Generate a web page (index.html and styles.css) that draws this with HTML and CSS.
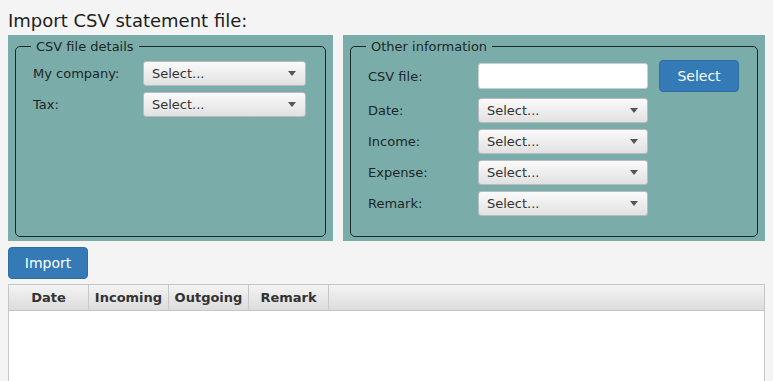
FILE: index.html
```html
<!DOCTYPE html>
<html lang="en">

<head>
    <meta charset="UTF-8">
    <meta name="viewport" content="width=device-width, initial-scale=1.0">
    <title>Import CSV statement file</title>
    <link rel="stylesheet" href="styles.css">
</head>

<body>
    <h1 class="page-title">Import CSV statement file:</h1>

    <div class="panels">
        <div class="panel">
            <fieldset class="group group-left">
                <legend>CSV file details</legend>
                <div class="form-grid">
                    <label>My company:</label>
                    <div class="combo"><span>Select...</span><span class="arrow"></span></div>
                    <label>Tax:</label>
                    <div class="combo"><span>Select...</span><span class="arrow"></span></div>
                </div>
            </fieldset>
        </div>

        <div class="panel">
            <fieldset class="group group-right">
                <legend>Other information</legend>
                <div class="form-grid form-grid-wide">
                    <label for="csvFile">CSV file:</label>
                    <input type="text" id="csvFile" class="text-input">
                    <button class="btn btn-select">Select</button>
                    <label>Date:</label>
                    <div class="combo"><span>Select...</span><span class="arrow"></span></div>
                    <label>Income:</label>
                    <div class="combo"><span>Select...</span><span class="arrow"></span></div>
                    <label>Expense:</label>
                    <div class="combo"><span>Select...</span><span class="arrow"></span></div>
                    <label>Remark:</label>
                    <div class="combo"><span>Select...</span><span class="arrow"></span></div>
                </div>
            </fieldset>
        </div>
    </div>

    <button class="btn btn-import">Import</button>

    <div class="table">
        <div class="table-head">
            <div class="th">Date</div>
            <div class="th">Incoming</div>
            <div class="th">Outgoing</div>
            <div class="th">Remark</div>
            <div class="th th-filler"></div>
        </div>
        <div class="table-body"></div>
    </div>
</body>

</html>
```

FILE: styles.css
```css
html,
body {
    height: 100%;
    overflow: hidden;
}

body {
    display: flex;
    flex-direction: column;
    box-sizing: border-box;
    font-family: "DejaVu Sans", Verdana, sans-serif;
    font-size: 13px;
    margin: 0;
    padding: 0 8px;
    background-color: #f4f4f4;
    color: #222;
}

.page-title {
    margin: 0;
    padding-top: 6px;
    font-size: 18px;
    font-weight: normal;
    line-height: 29px;
    color: #1e1e1e;
}

.panels {
    display: grid;
    grid-template-columns: 325px 422px;
    gap: 10px;
    height: 206px;
    flex-shrink: 0;
}

.panel {
    display: flex;
    flex-direction: column;
    background-color: #7aada9;
    padding: 4px 7px;
}

.group {
    flex: 1;
    min-width: 0;
    margin: 0;
    padding: 7px 0 0 0;
    border: 1px solid #1c2929;
    border-radius: 5px;
}

.group-right {
    padding-top: 6px;
}

.group legend {
    margin-left: 15px;
    padding: 0 5px;
    font-size: 13px;
    line-height: 15px;
    color: #1c2626;
}

.form-grid {
    display: grid;
    grid-template-columns: 110px 163px;
    row-gap: 6px;
    align-items: center;
    margin-left: 17px;
}

.form-grid-wide {
    grid-template-columns: 110px 170px 80px;
}

.form-grid label {
    grid-column: 1;
    color: #1c2626;
}

.form-grid-wide .combo {
    grid-column: 2;
}

.combo {
    display: flex;
    align-items: center;
    justify-content: space-between;
    height: 25px;
    box-sizing: border-box;
    padding: 0 9px 0 8px;
    border: 1px solid #b9bcbc;
    border-radius: 3px;
    background: linear-gradient(#fafafa, #e1e1e1);
    color: #333;
}

.arrow {
    width: 0;
    height: 0;
    border-left: 4px solid transparent;
    border-right: 4px solid transparent;
    border-top: 5px solid #555;
}

.text-input {
    height: 26px;
    box-sizing: border-box;
    margin: 0;
    border: 1px solid #c9cfce;
    border-radius: 3px;
    background-color: white;
}

.btn {
    font-family: inherit;
    font-size: 14px;
    color: white;
    background-color: #337ab7;
    border: 1px solid #2e6da4;
    border-radius: 4px;
    cursor: pointer;
    padding: 0;
}

.btn-select {
    width: 80px;
    height: 32px;
    margin-left: 11px;
}

.btn-import {
    display: block;
    flex-shrink: 0;
    width: 80px;
    height: 32px;
    margin-top: 6px;
}

.table {
    flex: 1;
    margin-top: 5px;
    border: 1px solid #c6c6c6;
    border-bottom: none;
    background-color: white;
}

.table-head {
    display: flex;
    height: 25px;
    border-bottom: 1px solid #c6c6c6;
    background: linear-gradient(#f4f4f4, #dcdcdc);
}

.th {
    width: 80px;
    box-sizing: border-box;
    border-right: 1px solid #c8c8c8;
    text-align: center;
    line-height: 26px;
    font-weight: bold;
    color: #333;
}

.th-filler {
    flex: 1;
    border-right: none;
}
```
